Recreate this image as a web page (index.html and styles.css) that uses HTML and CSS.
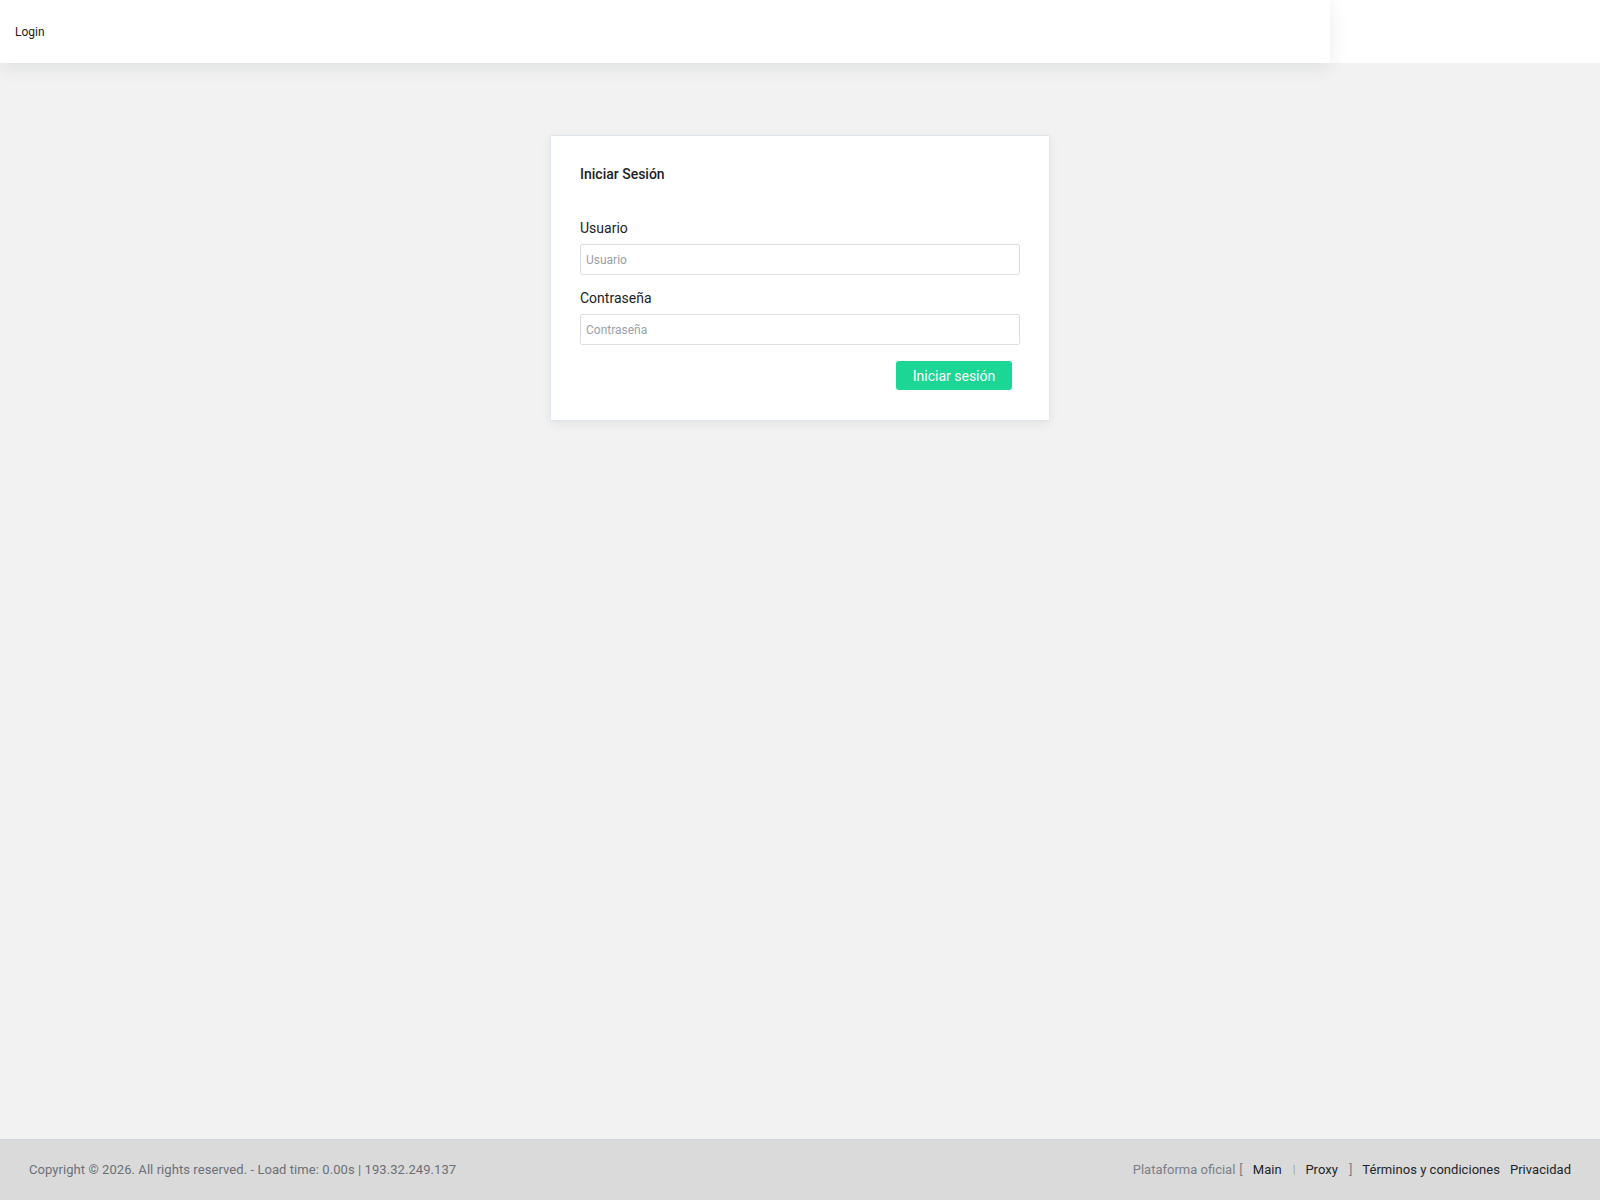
FILE: index.html
```html
<!DOCTYPE html>
<html lang="es">
<head>
<meta charset="utf-8">
<title>Login</title>
<link rel="stylesheet" href="styles.css">
</head>
<body>
<div class="page">
  <header class="topbar">
    <div class="topbar-panel"><span class="brand">Login</span></div>
  </header>
  <main class="main">
    <section class="card">
      <h1 class="card-title">Iniciar Sesión</h1>
      <form class="form">
        <label class="label" for="u">Usuario</label>
        <input class="input" id="u" type="text" placeholder="Usuario">
        <label class="label" for="p">Contraseña</label>
        <input class="input" id="p" type="password" placeholder="Contraseña">
        <div class="actions"><button type="button" class="btn">Iniciar sesión</button></div>
      </form>
    </section>
  </main>
  <footer class="footer">
    <div class="copy">Copyright © 2026. All rights reserved. - Load time: 0.00s | 193.32.249.137</div>
    <nav class="links">
      <span class="muted">Plataforma oficial</span>
      <span class="muted bracket">[</span>
      <a class="link" href="#">Main</a>
      <span class="sep">|</span>
      <a class="link" href="#">Proxy</a>
      <span class="muted bracket bracket-close">]</span>
      <a class="link" href="#">Términos y condiciones</a>
      <a class="link" href="#">Privacidad</a>
    </nav>
  </footer>
</div>
</body>
</html>
```

FILE: styles.css
```css
* { box-sizing: border-box; }
html, body { margin: 0; padding: 0; }
body {
  font-family: Roboto, "Liberation Sans", Arial, sans-serif;
  background: #f2f2f2;
  color: #212529;
}
.page {
  min-height: 100vh;
  display: flex;
  flex-direction: column;
}
.topbar {
  height: 63px;
  background: #fff;
  position: relative;
  z-index: 2;
}
.topbar-panel {
  width: 1330px;
  height: 63px;
  background: #fff;
  box-shadow: 0 4px 18px rgba(30, 40, 60, 0.09);
  display: flex;
  align-items: center;
  padding-left: 15px;
}
.brand {
  font-size: 12px;
  color: #222;
}
.main {
  flex: 1;
  display: flex;
  justify-content: center;
  align-items: flex-start;
  padding-top: 72px;
}
.card {
  width: 500px;
  background: #fff;
  border: 1px solid #e0e6ed;
  box-shadow: 0 3px 10px rgba(30, 40, 60, 0.07);
  padding: 28px 29px 30px;
}
.card-title {
  margin: 0 0 34px;
  font-size: 14px;
  font-weight: 500;
  color: #1b1e24;
  line-height: 20px;
}
.form {
  display: flex;
  flex-direction: column;
}
.label {
  font-size: 14px;
  color: #1b1e24;
  line-height: 20px;
  margin-bottom: 6px;
}
.input {
  height: 31px;
  border: 1px solid #dcdfe4;
  border-radius: 2px;
  padding: 0 5px;
  font-family: inherit;
  font-size: 12px;
  color: #333;
  margin-bottom: 13px;
  outline: none;
}
.input::placeholder { color: #9a9fa5; }
.actions {
  display: flex;
  justify-content: flex-end;
  padding-right: 8px;
  margin-top: 3px;
}
.btn {
  width: 116px;
  height: 29px;
  background: #1bd695;
  border: none;
  border-radius: 3px;
  color: #fff;
  font-family: inherit;
  font-size: 14px;
  padding: 0;
}
.footer {
  height: 61px;
  background: #dadada;
  border-top: 1px solid #cfd5dc;
  display: flex;
  align-items: center;
  justify-content: space-between;
  padding: 0 29px 1px;
  font-size: 13px;
}
.copy { color: #6b7078; letter-spacing: 0.07px; }
.links {
  display: flex;
  align-items: center;
}
.muted { color: #7b8087; }
.bracket { margin-left: 4px; }
.bracket-close { margin-left: 11px; }
.link {
  color: #212529;
  text-decoration: none;
  margin-left: 10px;
  letter-spacing: 0.03px;
}
.sep {
  color: #9aa0a6;
  font-size: 11px;
  margin-left: 11px;
  margin-right: 0;
}
```
